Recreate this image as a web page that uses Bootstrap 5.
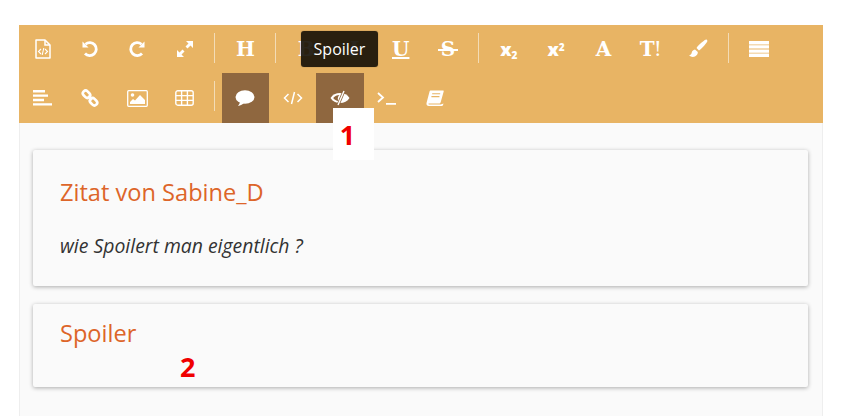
<!DOCTYPE html>
<html lang="en">
<head>
    <meta charset="UTF-8">
    <meta name="viewport" content="width=device-width, initial-scale=1.0">
    <title>Spoiler</title>
    <link href="https://cdn.jsdelivr.net/npm/bootstrap@5.3.2/dist/css/bootstrap.min.css" rel="stylesheet">
    <style>
        html, body { height: 100%; overflow: hidden; }
        body { background: #fff; font-family: "Open Sans", sans-serif; padding: 25px 21px 0 19px; }
        .editor-wrap { position: relative; height: 100%; background: #fafafa; border-right: 1px solid #eee; border-left: 1px solid #eee; }
        .edit-bar { background: #e8b464; margin-left: -1px; margin-right: -1px; height: 98px; }
        .tool-row { height: 48px; }
        .tool-row + .tool-row { height: 50px; }
        .tool { width: 47.3px; color: #fff; font-family: "DejaVu Serif", serif; font-weight: 700; font-size: 20px; line-height: 1; }
        .tool.on { background: #8f673f; }
        .tool.sans { font-family: "Open Sans", sans-serif; font-size: 18px; font-weight: 800; }
        .tool sub, .tool sup { font-size: 10px; }
        .tool svg { display: block; }
        .strike-s { position: relative; }
        .strike-s::after { content: ""; position: absolute; left: -3px; right: -3px; top: 10px; height: 2px; background: #fff; }
        .thin-mark { font-weight: 400; margin-left: -1px; }
        .tool-sep { width: 13.5px; }
        .tool-sep::after { content: ""; display: block; width: 1px; height: 30px; background: #f3dcb6; margin: 8px 0 0 6px; }
        .tip-box { position: absolute; left: 281px; top: 6px; width: 77px; height: 36px; background: rgba(20, 14, 6, .9); border-radius: 3px; color: #fff; font-size: 16px; box-shadow: 0 0 1px rgba(0,0,0,.5); }
        .note-num { position: absolute; z-index: 3; color: #f00000; font-family: "Open Sans", sans-serif; font-weight: 700; font-size: 27px; line-height: 1; }
        .note-one { left: 313px; top: 83px; width: 41px; height: 52px; background: #fff; padding: 13px 12px 0 0; text-align: center; }
        .note-two { left: 160px; top: 328px; }
        .post-box { margin: 0 14px 0 13px; background: #fafafa; border: 0; border-radius: 2px; box-shadow: 0 1px 4px rgba(0,0,0,.32); padding: 0 27px; }
        .post-one { margin-top: 27px; height: 136px; padding-top: 26px; }
        .post-two { margin-top: 18px; height: 83px; padding-top: 13px; }
        .post-title { color: #dd6529; font-size: 23.6px; font-weight: 400; line-height: 32px; margin: 0; }
        .post-text { color: #333; font-style: italic; font-size: 19.4px; line-height: 24px; margin: 26px 0 0; }
    </style>
</head>
<body>
    <div class="editor-wrap">
        <div class="edit-bar">
            <div class="tool-row d-flex">
                <div class="tool d-flex align-items-center justify-content-center">
                    <svg width="18" height="20" viewBox="0 0 18 20" fill="none" stroke="#fff" stroke-width="1.5"><path d="M2 1h9l5 5v13H2z" stroke-linejoin="round"/><path d="M11 1v5h5"/><path d="M7 10l-2.500 2.500L7 15M11 10l2.500 2.500L11 15M9.800 9l-1.600 7" stroke-width="1.100"/></svg>
                </div>
                <div class="tool d-flex align-items-center justify-content-center">
                    <svg width="18" height="18" viewBox="0 0 18 18" fill="none" stroke="#fff" stroke-width="2.800"><path d="M4.500 4.200A6.500 6.500 0 1 1 4 13.500"/><path d="M1.500 1.500v6h6z" fill="#fff" stroke="none"/></svg>
                </div>
                <div class="tool d-flex align-items-center justify-content-center">
                    <svg width="18" height="18" viewBox="0 0 18 18" fill="none" stroke="#fff" stroke-width="2.800"><path d="M13.500 4.200A6.500 6.500 0 1 0 14 13.500"/><path d="M16.500 1.500v6h-6z" fill="#fff" stroke="none"/></svg>
                </div>
                <div class="tool d-flex align-items-center justify-content-center">
                    <svg width="18" height="18" viewBox="0 0 18 18" fill="#fff"><path d="M17 1v7l-2.500-2.500-3 3-2-2 3-3L10 1zM1 17v-7l2.500 2.500 3-3 2 2-3 3L8 17z"/></svg>
                </div>
                <div class="tool-sep"></div>
                <div class="tool d-flex align-items-center justify-content-center">H</div>
                <div class="tool-sep"></div>
                <div class="tool d-flex align-items-center justify-content-center">B</div>
                <div class="tool d-flex align-items-center justify-content-center fst-italic">I</div>
                <div class="tool d-flex align-items-center justify-content-center text-decoration-underline">U</div>
                <div class="tool d-flex align-items-center justify-content-center"><span class="strike-s">S</span></div>
                <div class="tool-sep"></div>
                <div class="tool sans d-flex align-items-center justify-content-center"><span>x<sub>2</sub></span></div>
                <div class="tool sans d-flex align-items-center justify-content-center"><span>x<sup>2</sup></span></div>
                <div class="tool d-flex align-items-center justify-content-center">A</div>
                <div class="tool d-flex align-items-center justify-content-center"><span>T<span class="thin-mark">!</span></span></div>
                <div class="tool d-flex align-items-center justify-content-center">
                    <svg width="20" height="20" viewBox="0 0 20 20" fill="#fff"><path d="M19 1c-1-1-2 0-4 1.500S9.500 7 8.500 9l2.500 2.500c2-1.200 5-4.500 6.500-6.500S20 2 19 1z"/><path d="M7 10.500c-2 .3-3 1.700-3.300 3.200C3.400 15.300 2.500 16 1 16c1.500 2 4 2.500 6 1.500s3-3 2.800-4.500z"/></svg>
                </div>
                <div class="tool-sep"></div>
                <div class="tool d-flex align-items-center justify-content-center">
                    <svg width="20" height="16" viewBox="0 0 20 16" fill="#fff"><path d="M0 0h20v3.400H0zM0 4.200h20v3.400H0zM0 8.400h20v3.400H0zM0 12.600h20V16H0z"/></svg>
                </div>
            </div>
            <div class="tool-row d-flex">
                <div class="tool d-flex align-items-center justify-content-center">
                    <svg width="19" height="16" viewBox="0 0 19 16" fill="#fff"><path d="M0 0h12v2.400H0zM0 4.400h15v2.400H0zM0 8.800h11v2.400H0zM0 13.200h19v2.400H0z"/></svg>
                </div>
                <div class="tool d-flex align-items-center justify-content-center">
                    <svg width="18" height="18" viewBox="0 0 18 18" fill="none" stroke="#fff" stroke-width="2.600"><rect x="1.500" y="2.500" width="8" height="5.500" rx="2.700" transform="rotate(45 5.500 5.250)"/><rect x="8.500" y="10" width="8" height="5.500" rx="2.700" transform="rotate(45 12.500 12.750)"/><path d="M7 7l4 4" stroke-width="2"/></svg>
                </div>
                <div class="tool d-flex align-items-center justify-content-center">
                    <svg width="21" height="17" viewBox="0 0 21 17" fill="none" stroke="#fff" stroke-width="1.300"><rect x=".7" y=".7" width="19.600" height="15.600" rx="1"/><circle cx="5.500" cy="5" r="1.800" fill="#fff" stroke="none"/><path d="M3 14v-2l3-3 2 1.500L13 5l5 5v4z" fill="#fff" stroke="none"/></svg>
                </div>
                <div class="tool d-flex align-items-center justify-content-center">
                    <svg width="19" height="16" viewBox="0 0 19 16" fill="none" stroke="#fff" stroke-width="1.400"><rect x=".8" y=".8" width="17.400" height="14.400" rx="2"/><path d="M.8 5.600h17.400M.8 10.400h17.400M6.600.8v14.400M12.400.8v14.400"/></svg>
                </div>
                <div class="tool-sep"></div>
                <div class="tool on d-flex align-items-center justify-content-center">
                    <svg width="20" height="17" viewBox="0 0 20 17" fill="#fff"><ellipse cx="10" cy="7" rx="9.500" ry="6.700"/><path d="M5 11c0 2-.8 3.500-2 5 2.500-.3 5-1.700 6.500-3.500z"/></svg>
                </div>
                <div class="tool d-flex align-items-center justify-content-center">
                    <svg width="20" height="14" viewBox="0 0 20 14" fill="none" stroke="#fff" stroke-width="1.500"><path d="M5.500 3L1.500 7l4 4M14.500 3l4 4-4 4M11.500 1L8.500 13"/></svg>
                </div>
                <div class="tool on d-flex align-items-center justify-content-center">
                    <svg width="20" height="16" viewBox="0 0 20 16"><path d="M.5 8C2.500 4.800 6 3 10 3s7.500 1.800 9.500 5c-2 3.200-5.500 5-9.500 5S2.500 11.200.5 8z" fill="#fff"/><path d="M3.200 8C4.800 6 7 5 9.500 5 8 6.300 7.500 8 8 10c.1.500.3.800.5 1.100C6.300 10.800 4.500 9.700 3.200 8z" fill="#8f673f"/><path d="M14 1L8 15" stroke="#8f673f" stroke-width="3"/><path d="M14 1L8 15" stroke="#fff" stroke-width="1.400"/></svg>
                </div>
                <div class="tool d-flex align-items-center justify-content-center">
                    <svg width="20" height="14" viewBox="0 0 20 14" fill="none" stroke="#fff" stroke-width="1.800"><path d="M1 2l5 4.500L1 11M9 12.800h10"/></svg>
                </div>
                <div class="tool d-flex align-items-center justify-content-center">
                    <svg width="18" height="17" viewBox="0 0 19 18" fill="#fff"><path d="M5 .5h13c.6 0 .9.500.7 1.100L15.500 13c-.3.900-.8 1.300-1.700 1.300H3.500c-1 0-1.300.7-.2 1h12.200l3-.9-.5 1.500c-.2.600-.7 1-1.300 1H3c-2 0-3-1.500-2.400-3.500L3.600 2C3.900 1 4.300.5 5 .5z"/><path d="M6.500 4h8.500M5.700 7h8.500" stroke="#e8b464" stroke-width="1.200"/></svg>
                </div>
            </div>
        </div>

        <div class="tip-box d-flex align-items-center justify-content-center">Spoiler</div>
        <div class="note-num note-one">1</div>

        <div class="card post-box post-one">
            <h4 class="post-title">Zitat von Sabine_D</h4>
            <p class="post-text">wie Spoilert man eigentlich ?</p>
        </div>
        <div class="card post-box post-two">
            <h4 class="post-title">Spoiler</h4>
        </div>
        <div class="note-num note-two">2</div>
    </div>
</body>
</html>
